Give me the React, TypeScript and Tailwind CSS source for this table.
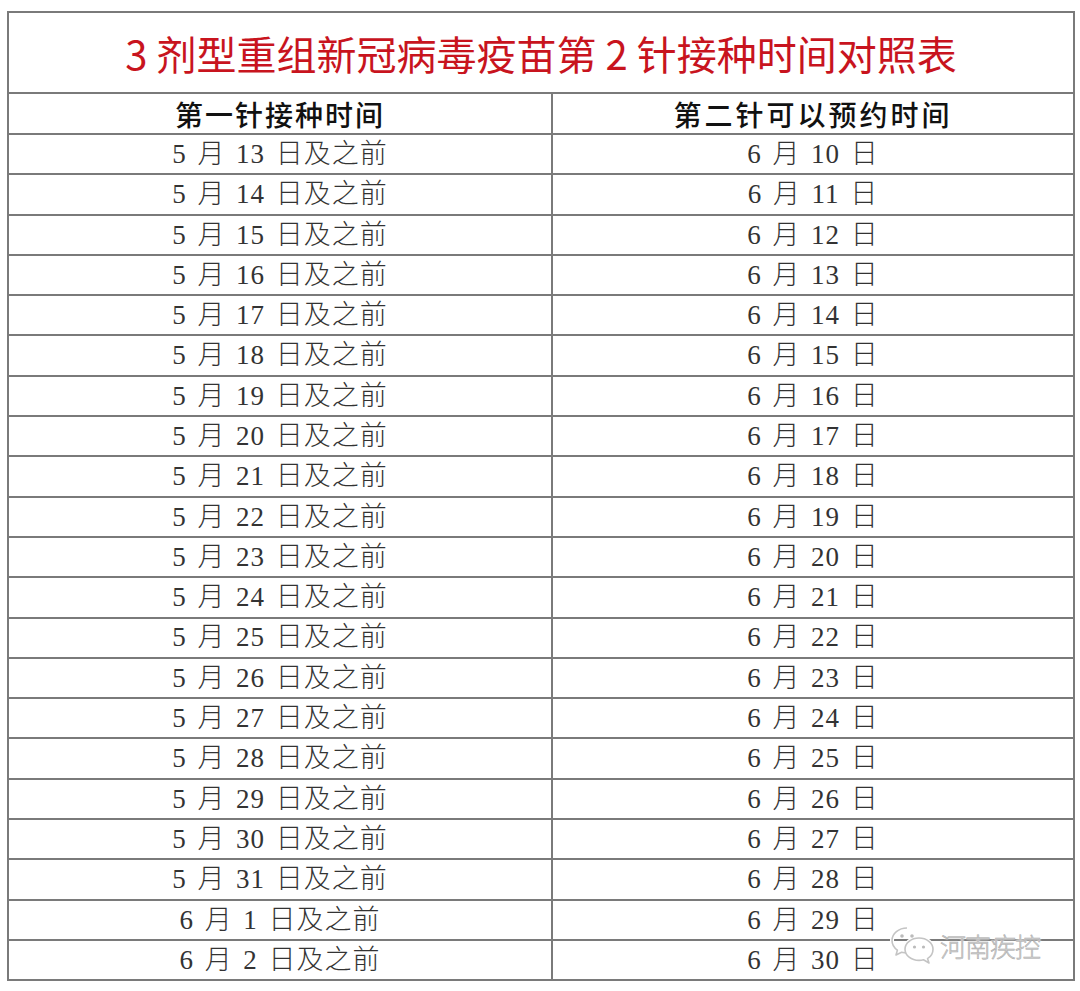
const FIRST = [
  "5 月 13 日及之前", "5 月 14 日及之前", "5 月 15 日及之前", "5 月 16 日及之前",
  "5 月 17 日及之前", "5 月 18 日及之前", "5 月 19 日及之前", "5 月 20 日及之前",
  "5 月 21 日及之前", "5 月 22 日及之前", "5 月 23 日及之前", "5 月 24 日及之前",
  "5 月 25 日及之前", "5 月 26 日及之前", "5 月 27 日及之前", "5 月 28 日及之前",
  "5 月 29 日及之前", "5 月 30 日及之前", "5 月 31 日及之前", "6 月 1 日及之前",
  "6 月 2 日及之前",
];
const SECOND = Array.from({ length: 21 }, (_, i) => `6 月 ${10 + i} 日`);

function WeChatMark() {
  return (
    <svg width="46" height="40" viewBox="0 0 46 40" fill="none">
      <g stroke="#fff" strokeWidth={4} strokeLinejoin="round">
        <path d="M17 3C8.7 3 2 8.6 2 15.5c0 3.9 2.1 7.3 5.4 9.6L6 30l5.6-2.8c1.7.5 3.5.8 5.4.8" />
        <path d="M29 13c-7.7 0-14 5-14 11.2S21.3 35.4 29 35.4c1.6 0 3.1-.2 4.5-.6L39 38l-1.5-4.4C41 31.5 43 28 43 24.2 43 18 36.7 13 29 13Z" />
      </g>
      <g stroke="#c4c4c4" strokeWidth={1.6} strokeLinejoin="round">
        <path d="M17 3C8.7 3 2 8.6 2 15.5c0 3.9 2.1 7.3 5.4 9.6L6 30l5.6-2.8c1.7.5 3.5.8 5.4.8" />
        <path d="M29 13c-7.7 0-14 5-14 11.2S21.3 35.4 29 35.4c1.6 0 3.1-.2 4.5-.6L39 38l-1.5-4.4C41 31.5 43 28 43 24.2 43 18 36.7 13 29 13Z" fill="#fff" />
      </g>
      <circle cx="12" cy="11" r="1.8" fill="#bbb" />
      <circle cx="22" cy="11" r="1.8" fill="#bbb" />
      <circle cx="24.5" cy="22" r="1.6" fill="#bbb" />
      <circle cx="33.5" cy="22" r="1.6" fill="#bbb" />
    </svg>
  );
}

export default function App() {
  const cell =
    "flex items-center justify-center h-[40.3px] border-t-2 border-[#7a7a7a] text-[27px] font-light text-[#333] tracking-[1px] [word-spacing:3px]";
  return (
    <div className="relative w-[1080px] h-[991px] bg-white pt-[11px] pl-[7px] font-['Liberation_Serif','Noto_Sans_CJK_SC',serif]">
      <div className="w-[1068px] border-2 border-[#7a7a7a]">
        <div className="flex h-[79px] items-center justify-center text-[40px] text-[#c8141e] font-['Noto_Sans_CJK_SC',sans-serif]">
          3 剂型重组新冠病毒疫苗第 2 针接种时间对照表
        </div>
        <div className="grid grid-cols-[544px_1fr]">
          <div className="border-r-2 border-[#7a7a7a]">
            <div className="flex h-[41px] items-center justify-center border-t-2 border-[#7a7a7a] text-[28px] tracking-[2px] text-[#111] font-medium font-['Noto_Sans_CJK_SC',sans-serif]">
              第一针接种时间
            </div>
            {FIRST.map((t) => (
              <div key={t} className={cell}>
                {t}
              </div>
            ))}
          </div>
          <div>
            <div className="flex h-[41px] items-center justify-center border-t-2 border-[#7a7a7a] text-[28px] tracking-[3px] text-[#111] font-medium font-['Noto_Sans_CJK_SC',sans-serif]">
              第二针可以预约时间
            </div>
            {SECOND.map((t) => (
              <div key={t} className={cell}>
                {t}
              </div>
            ))}
          </div>
        </div>
      </div>

      {/* 水印 */}
      <div className="absolute left-[890px] top-[925px] flex items-center gap-[4px]">
        <WeChatMark />
        <span
          className="text-[26px] font-light text-[#cfcfcf] font-['Noto_Sans_CJK_SC',sans-serif] tracking-[-1px]"
          style={{ WebkitTextStroke: "0.5px #aaa", textShadow: "0 0 2px #fff, 0 0 2px #fff" }}
        >
          河南疾控
        </span>
      </div>
    </div>
  );
}
